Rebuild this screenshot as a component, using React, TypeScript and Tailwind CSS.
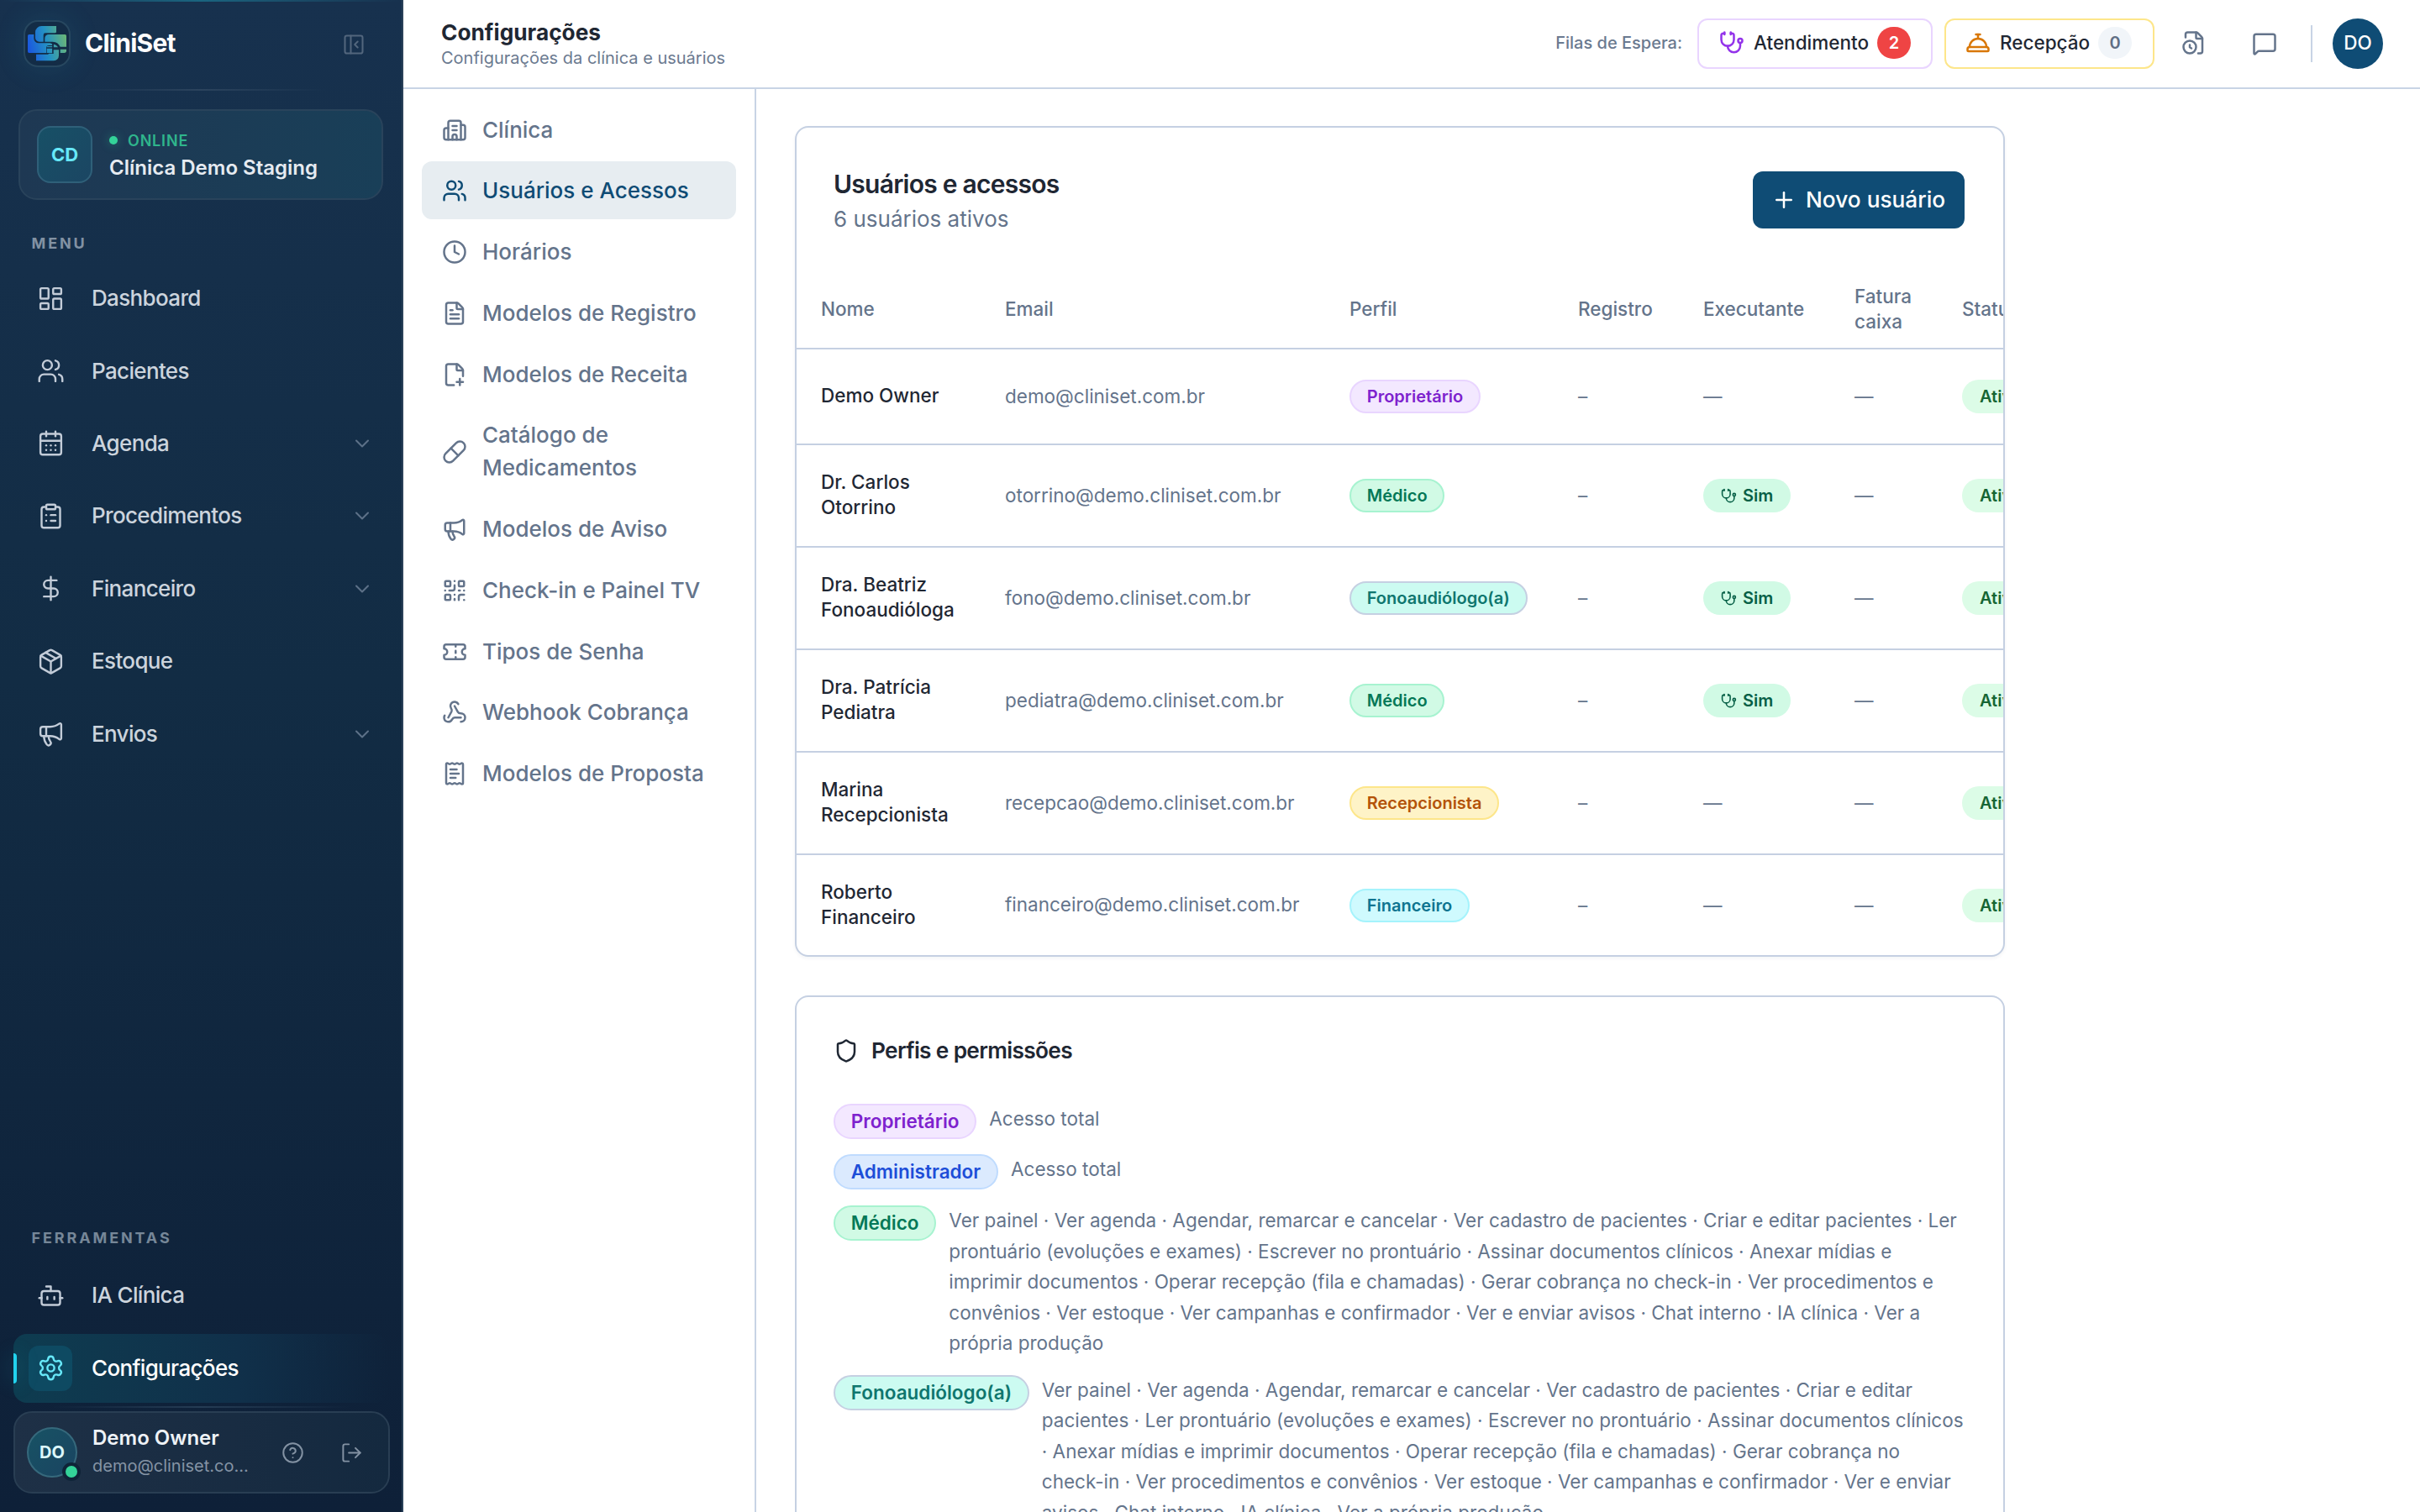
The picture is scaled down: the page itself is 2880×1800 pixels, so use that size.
import React from 'react';
import {
    Bot,
    Building2,
    CalendarDays,
    ChevronDown,
    CircleHelp,
    ClipboardList,
    Clock,
    ConciergeBell,
    DollarSign,
    FileClock,
    FilePlusCorner,
    FileText,
    LayoutDashboard,
    LogOut,
    Megaphone,
    MessageSquare,
    Package,
    PanelLeftClose,
    Pill,
    Plus,
    QrCode,
    ReceiptText,
    Settings,
    Shield,
    Stethoscope,
    Ticket,
    Users,
    Webhook,
} from 'lucide-react';
import clsx from 'clsx';

const MENU = [
    { label: 'Dashboard', icon: LayoutDashboard },
    { label: 'Pacientes', icon: Users },
    { label: 'Agenda', icon: CalendarDays, expandable: true },
    { label: 'Procedimentos', icon: ClipboardList, expandable: true },
    { label: 'Financeiro', icon: DollarSign, expandable: true },
    { label: 'Estoque', icon: Package },
    { label: 'Envios', icon: Megaphone, expandable: true },
];

const TOOLS = [
    { label: 'IA Clínica', icon: Bot },
    { label: 'Configurações', icon: Settings, active: true },
];

const SETTINGS_NAV = [
    { label: 'Clínica', icon: Building2 },
    { label: 'Usuários e Acessos', icon: Users, active: true },
    { label: 'Horários', icon: Clock },
    { label: 'Modelos de Registro', icon: FileText },
    { label: 'Modelos de Receita', icon: FilePlusCorner },
    { label: 'Catálogo de Medicamentos', icon: Pill },
    { label: 'Modelos de Aviso', icon: Megaphone },
    { label: 'Check-in e Painel TV', icon: QrCode },
    { label: 'Tipos de Senha', icon: Ticket },
    { label: 'Webhook Cobrança', icon: Webhook },
    { label: 'Modelos de Proposta', icon: ReceiptText },
];

type Role = 'Proprietário' | 'Administrador' | 'Médico' | 'Fonoaudiólogo(a)' | 'Recepcionista' | 'Financeiro';

const ROLE_STYLES: Record<Role, string> = {
    'Proprietário': 'bg-[#f3e8ff] border-[#e9d5ff] text-[#7e22ce]',
    'Administrador': 'bg-[#dbeafe] border-[#bfdbfe] text-[#1d4ed8]',
    'Médico': 'bg-[#d1fae5] border-[#a7f3d0] text-[#047857]',
    'Fonoaudiólogo(a)': 'bg-[#ccfbf1] border-[#c5d0e2] text-[#0f766e]',
    'Recepcionista': 'bg-[#fef3c7] border-[#fde68a] text-[#b45309]',
    'Financeiro': 'bg-[#cffafe] border-[#a5f3fc] text-[#0e7490]',
};

const USERS: { name: string; email: string; role: Role; executes?: boolean }[] = [
    { name: 'Demo Owner', email: 'demo@cliniset.com.br', role: 'Proprietário' },
    { name: 'Dr. Carlos Otorrino', email: 'otorrino@demo.cliniset.com.br', role: 'Médico', executes: true },
    { name: 'Dra. Beatriz Fonoaudióloga', email: 'fono@demo.cliniset.com.br', role: 'Fonoaudiólogo(a)', executes: true },
    { name: 'Dra. Patrícia Pediatra', email: 'pediatra@demo.cliniset.com.br', role: 'Médico', executes: true },
    { name: 'Marina Recepcionista', email: 'recepcao@demo.cliniset.com.br', role: 'Recepcionista' },
    { name: 'Roberto Financeiro', email: 'financeiro@demo.cliniset.com.br', role: 'Financeiro' },
];

const CLINICAL_PERMISSIONS = [
    'Ver painel',
    'Ver agenda',
    'Agendar, remarcar e cancelar',
    'Ver cadastro de pacientes',
    'Criar e editar pacientes',
    'Ler prontuário (evoluções e exames)',
    'Escrever no prontuário',
    'Assinar documentos clínicos',
    'Anexar mídias e imprimir documentos',
    'Operar recepção (fila e chamadas)',
    'Gerar cobrança no check-in',
    'Ver procedimentos e convênios',
    'Ver estoque',
    'Ver campanhas e confirmador',
    'Ver e enviar avisos',
    'Chat interno',
    'IA clínica',
    'Ver a própria produção',
];

const PERMISSIONS: { role: Role; items: string[] }[] = [
    { role: 'Proprietário', items: ['Acesso total'] },
    { role: 'Administrador', items: ['Acesso total'] },
    { role: 'Médico', items: CLINICAL_PERMISSIONS },
    { role: 'Fonoaudiólogo(a)', items: CLINICAL_PERMISSIONS },
];

const Logo = () => (
    <svg viewBox="12 12 168 168" className="size-[56px] shrink-0" fill="none">
        <defs>
            <linearGradient id="logo" x1="27" y1="110" x2="165" y2="80" gradientUnits="userSpaceOnUse">
                <stop offset="0" stopColor="#1a56e0" />
                <stop offset="0.5" stopColor="#2492c4" />
                <stop offset="1" stopColor="#69b578" />
            </linearGradient>
        </defs>
        <g fill="url(#logo)">
            <path d="M76 33h53v20a5 5 0 0 1-5 5H90a7 7 0 0 0-7 7v24H68a14 14 0 0 1-14-14V55a22 22 0 0 1 22-22z" />
            <path d="M32 63h17v14a17 17 0 0 0 17 17h40a10 10 0 0 1 10 8h-13a10 10 0 0 0-10 10v17H32a5 5 0 0 1-5-5V68a5 5 0 0 1 5-5z" />
            <path d="M102 63h58a5 5 0 0 1 5 5v39h-22a30 30 0 0 0-29-18H88V77a14 14 0 0 1 14-14z" />
            <path d="M57 134h34a12 12 0 0 0 12-3h14v-13h21v21a18 18 0 0 1-18 18H57z" />
            <path d="M95 105h20v24H95z" />
            <path d="M119 98a20 20 0 0 1 17 14h-17z" />
            <path d="M143 116h22v5a8 8 0 0 1-8 8h-14z" />
        </g>
        <path d="M94 111h70M117 94v38" stroke="#132c46" strokeWidth="4" />
    </svg>
);

const SidebarItem = ({ icon: Icon, label, active, expandable }: any) => (
    <div
        className={clsx(
            'relative flex h-[82.4px] items-center gap-[23px] rounded-[16px] pr-[24px] pl-[18px]',
            active && 'bg-linear-to-r from-[#0e3c50] via-[#10304a] via-60% to-[#0f2239]/0'
        )}
    >
        {active && (
            <span className="absolute top-[23px] left-0 h-[36px] w-[4px] rounded-r-[4px] bg-[#22d3ee] shadow-[0_0_24px_rgba(34,211,238,0.35)]" />
        )}
        <span
            className={clsx(
                'flex h-[54px] w-[52px] items-center justify-center rounded-[12px]',
                active ? 'bg-[#0e4a62] text-[#67e8f9]' : 'text-[#c3ccd8]'
            )}
        >
            <Icon size={33} strokeWidth={1.75} />
        </span>
        <span
            className={clsx(
                'mt-[-1px] flex-1 text-[26px] font-medium tracking-[-0.025em]',
                active ? 'text-white' : 'text-[#ccd4dd]'
            )}
        >
            {label}
        </span>
        {expandable && <ChevronDown size={28} strokeWidth={1.75} className="mr-[-7px] text-[#5d7188]" />}
    </div>
);

const Sidebar = () => (
    <aside className="relative flex h-full w-[480px] shrink-0 flex-col border-r-2 border-[#2a4159] bg-linear-to-b from-[#17314e] via-[#122c44] via-45% to-[#0e2038]">
        <div className="absolute inset-x-0 top-0 h-[2px] bg-linear-to-r from-[#17314e] via-[#1a6580] to-[#17314e]" />
        <div className="flex h-[104px] shrink-0 items-center pr-[43px] pl-[28px]">
            <div className="flex size-[56px] items-center justify-center rounded-[17px] border-2 border-[#27475f] bg-[#132c46] shadow-[0_0_36px_rgba(34,180,211,0.13)]">
                <Logo />
            </div>
            <span className="mt-[-2px] ml-[17px] flex-1 text-[30px] font-bold tracking-[-0.025em] text-white">CliniSet</span>
            <PanelLeftClose size={28} strokeWidth={1.75} className="mt-[2px] text-[#52667d]" />
        </div>
        <div className="mx-[90px] mt-[2px] h-[2px] shrink-0 bg-linear-to-r from-transparent via-[#2b435d] to-transparent" />

        <div className="mx-[22px] mt-[22px] flex h-[108px] shrink-0 items-center rounded-[22px] border-2 border-[#29435b] bg-linear-to-r from-[#1e3853] to-[#193f58] pl-[20px]">
            <div className="flex h-[68px] w-[66px] items-center justify-center rounded-[16px] border-2 border-[#2f6079] bg-linear-to-br from-[#175066] to-[#1b4663] text-[22px] font-bold text-[#67e8f9]">
                CD
            </div>
            <div className="mt-[5px] ml-[20px]">
                <div className="flex h-[26px] items-center gap-[12px]">
                    <span className="size-[10px] rounded-full bg-[#34d399] shadow-[0_0_12px_rgba(52,211,153,0.4)]" />
                    <span className="text-[18px] font-semibold tracking-[0.045em] text-[#2fb58c]">ONLINE</span>
                </div>
                <div className="text-[24px] leading-[39px] font-semibold text-[#e6ebf1]">Clínica Demo Staging</div>
            </div>
        </div>

        <div className="mt-[38px] ml-[37.5px] h-[27px] shrink-0 text-[18px] leading-[27px] font-bold tracking-[0.16em] text-[#8292a3]">
            MENU
        </div>
        <nav className="mt-[11px] flex flex-1 flex-col gap-[4px] px-[16px]">
            {MENU.map((item) => (
                <SidebarItem key={item.label} {...item} />
            ))}
        </nav>

        <div className="ml-[37.5px] h-[27px] shrink-0 text-[18px] leading-[27px] font-bold tracking-[0.16em] text-[#768798]">
            FERRAMENTAS
        </div>
        <nav className="mt-[14px] flex flex-col gap-[4px] px-[16px]">
            {TOOLS.map((item) => (
                <SidebarItem key={item.label} {...item} />
            ))}
        </nav>
        <div className="mx-[60px] mt-[4px] h-[2px] shrink-0 bg-linear-to-r from-transparent via-[#253c54] to-transparent" />

        <div className="mx-[16px] mt-[4px] mb-[22px] flex h-[98px] w-[448px] shrink-0 items-center rounded-[22px] border-2 border-[#293e53] bg-linear-to-r from-[#1e3046] to-[#14293f] pl-[14px]">
            <div className="relative flex size-[60px] shrink-0 items-center justify-center rounded-full border-2 border-[#36697c] bg-linear-to-br from-[#175264] to-[#1a4461] text-[20px] font-bold text-[#dcf7fb]">
                DO
                <span className="absolute right-[-6px] bottom-[-6px] size-[22px] rounded-full border-4 border-[#0f2438] bg-[#34d399]" />
            </div>
            <div className="mt-[-2px] ml-[18px] w-[190px] shrink-0">
                <div className="text-[24px] leading-[34px] font-semibold text-[#eef2f6]">Demo Owner</div>
                <div className="text-[20px] leading-[32px] text-[#8594a5]">demo@cliniset.co...</div>
            </div>
            <CircleHelp size={27} strokeWidth={1.75} className="ml-[35px] shrink-0 text-[#8392a3]" />
            <LogOut size={27} strokeWidth={1.75} className="ml-[43px] shrink-0 text-[#8392a3]" />
        </div>
    </aside>
);

const Header = () => (
    <header className="flex h-[106px] shrink-0 items-center border-b-2 border-[#c8d4e5] pr-[44px] pl-[45px]">
        <div className="flex-1">
            <h1 className="text-[26.25px] leading-[34px] font-bold text-[#1f2733]">Configurações</h1>
            <p className="text-[20px] leading-[27px] text-[#6b7a90]">Configurações da clínica e usuários</p>
        </div>
        <span className="mt-[-2px] mr-[18px] text-[20px] font-medium text-[#6b7a90]">Filas de Espera:</span>
        <button className="mr-[14px] flex h-[60px] w-[280px] items-center rounded-[12px] border-2 border-[#e9d5ff] pb-[2px] pl-[24px] text-[22.5px] font-medium text-[#1f2733]">
            <Stethoscope size={30} className="text-[#9333ea]" />
            <span className="ml-[11px]">Atendimento</span>
            <span className="ml-[10px] flex h-[38px] w-[40px] items-center justify-center rounded-full bg-[#ef4444] text-[20px] font-semibold text-white">
                2
            </span>
        </button>
        <button className="flex h-[60px] w-[250px] items-center rounded-[12px] border-2 border-[#fde68a] pb-[2px] pl-[23px] text-[22.5px] font-medium text-[#1f2733]">
            <ConciergeBell size={30} className="text-[#d97706]" />
            <span className="ml-[11px]">Recepção</span>
            <span className="ml-[10px] flex h-[38px] w-[40px] items-center justify-center rounded-full bg-[#f1f5f9] text-[20px] font-semibold text-[#5f6e84]">
                0
            </span>
        </button>
        <FileClock size={30} className="mt-[-2px] ml-[32px] text-[#64748b]" />
        <MessageSquare size={30} className="mt-[-1px] ml-[54px] text-[#64748b]" />
        <span className="mr-[24px] ml-[40px] h-[44px] w-[2px] bg-[#c8d4e5]" />
        <span className="flex size-[60px] items-center justify-center rounded-full bg-[#0f4c75] pb-[2px] text-[22.5px] font-medium text-white">
            DO
        </span>
    </header>
);

const SettingsNav = () => (
    <nav className="flex w-[420px] shrink-0 flex-col gap-[3.75px] border-r-2 border-[#c8d4e5] px-[22px] pt-[13.5px]">
        {SETTINGS_NAV.map(({ label, icon: Icon, active }) => (
            <div
                key={label}
                className={clsx(
                    'flex items-center gap-[18px] rounded-[12px] py-[15px] pr-[15px] pl-[24px] text-[26px] leading-[39px] font-medium',
                    active ? 'bg-[#e7edf1] text-[#0f4c75]' : 'text-[#64748b]'
                )}
            >
                <Icon size={30} className="mt-px shrink-0" />
                <span>{label}</span>
            </div>
        ))}
    </nav>
);

const RoleBadge = ({ role, large }: { role: Role; large?: boolean }) => (
    <span
        className={clsx(
            'inline-flex shrink-0 items-center rounded-full border-2 font-semibold whitespace-nowrap',
            large ? 'h-[42px] px-[18.75px] text-[22.5px]' : 'h-[40px] px-[18.75px] text-[20px]',
            ROLE_STYLES[role]
        )}
    >
        {role}
    </span>
);

const UsersCard = () => (
    <section className="w-[1440px] shrink-0 overflow-hidden rounded-[16px] border-2 border-[#c5d0e2] bg-white shadow-[0_2px_4px_rgba(15,40,80,0.05)]">
        <div className="flex items-center justify-between pt-[45px] pr-[46px] pb-[42px] pl-[44px]">
            <div>
                <h2 className="pt-px text-[30px] leading-[42px] font-semibold tracking-[-0.025em] text-[#1f2733]">Usuários e acessos</h2>
                <p className="text-[26px] leading-[41px] text-[#64748b]">6 usuários ativos</p>
            </div>
            <button className="mt-[-2px] flex h-[68px] w-[252px] items-center rounded-[12px] bg-[#0f4c75] pl-[22px] text-[26.25px] font-medium text-white">
                <Plus size={30} />
                <span className="ml-[11px]">Novo usuário</span>
            </button>
        </div>
        <table className="w-[1539px] table-fixed border-collapse text-left text-[22.5px] leading-[30px] text-[#64748b]">
            <colgroup>
                <col className="w-[218px]" />
                <col className="w-[410px]" />
                <col className="w-[272px]" />
                <col className="w-[149px]" />
                <col className="w-[180px]" />
                <col className="w-[128px]" />
                <col className="w-[182px]" />
            </colgroup>
            <thead>
                <tr className="h-[92px] border-b-2 border-[#c5d0e2]">
                    {['Nome', 'Email', 'Perfil', 'Registro', 'Executante', 'Fatura caixa', 'Status'].map((title) => (
                        <th key={title} className="px-[30px] pt-0 pb-px font-medium first:pl-[29px]">
                            {title}
                        </th>
                    ))}
                </tr>
            </thead>
            <tbody>
                {USERS.map((user, i) => (
                    <tr
                        key={user.email}
                        className={clsx(
                            i === 0 ? 'h-[114px]' : i === USERS.length - 1 ? 'h-[120px]' : 'h-[122px]',
                            i < USERS.length - 1 && 'border-b-2 border-[#c5d0e2]'
                        )}
                    >
                        <td className="pt-0 pr-[30px] pb-[2px] pl-[29px] font-medium text-[#1f2733]">{user.name}</td>
                        <td className="px-[30px] pt-0 pb-px">{user.email}</td>
                        <td className="px-[30px] py-0 align-middle">
                            <div className="flex">
                                <RoleBadge role={user.role} />
                            </div>
                        </td>
                        <td className="px-[30px] py-0">–</td>
                        <td className="px-[30px] py-0">
                            {user.executes ? (
                                <div className="flex h-[40px] w-[104px] items-center rounded-full bg-[#d1fae5] pl-[21px] text-[20px] font-semibold text-[#065f46]">
                                    <Stethoscope size={19} />
                                    <span className="ml-[7px]">Sim</span>
                                </div>
                            ) : (
                                '—'
                            )}
                        </td>
                        <td className="px-[30px] py-0">—</td>
                        <td className="px-[30px] py-0">
                            <div className="flex h-[40px] w-[92px] items-center justify-center rounded-full bg-[#dcfce7] text-[20px] font-semibold text-[#166534]">
                                Ativo
                            </div>
                        </td>
                    </tr>
                ))}
            </tbody>
        </table>
    </section>
);

const PermissionsCard = () => (
    <section className="mt-[46px] w-[1440px] shrink-0 rounded-[16px] border-2 border-[#c5d0e2] bg-white pt-[44px] pr-[46px] pb-[45px] pl-[44px]">
        <h2 className="flex items-center gap-[15px] text-[26.25px] leading-[39px] font-semibold tracking-[-0.025em] text-[#1f2733]">
            <Shield size={30} />
            Perfis e permissões
        </h2>
        <div className="mt-[43.5px] flex flex-col gap-[18.75px]">
            {PERMISSIONS.map(({ role, items }) => (
                <div key={role} className="flex items-start gap-[15px] text-[22.5px]">
                    <RoleBadge role={role} large />
                    <p className="leading-[36.56px] text-[#64748b]">{items.join(' · ')}</p>
                </div>
            ))}
        </div>
    </section>
);

const App = () => (
    <div className="flex h-[1800px] w-[2880px] overflow-hidden bg-white font-[Inter,sans-serif]">
        <Sidebar />
        <div className="flex min-w-0 flex-1 flex-col">
            <Header />
            <div className="flex min-h-0 flex-1">
                <SettingsNav />
                <main className="flex min-w-0 flex-1 flex-col overflow-hidden pt-[44px] pl-[46px]">
                    <UsersCard />
                    <PermissionsCard />
                </main>
            </div>
        </div>
    </div>
);

export default App;
